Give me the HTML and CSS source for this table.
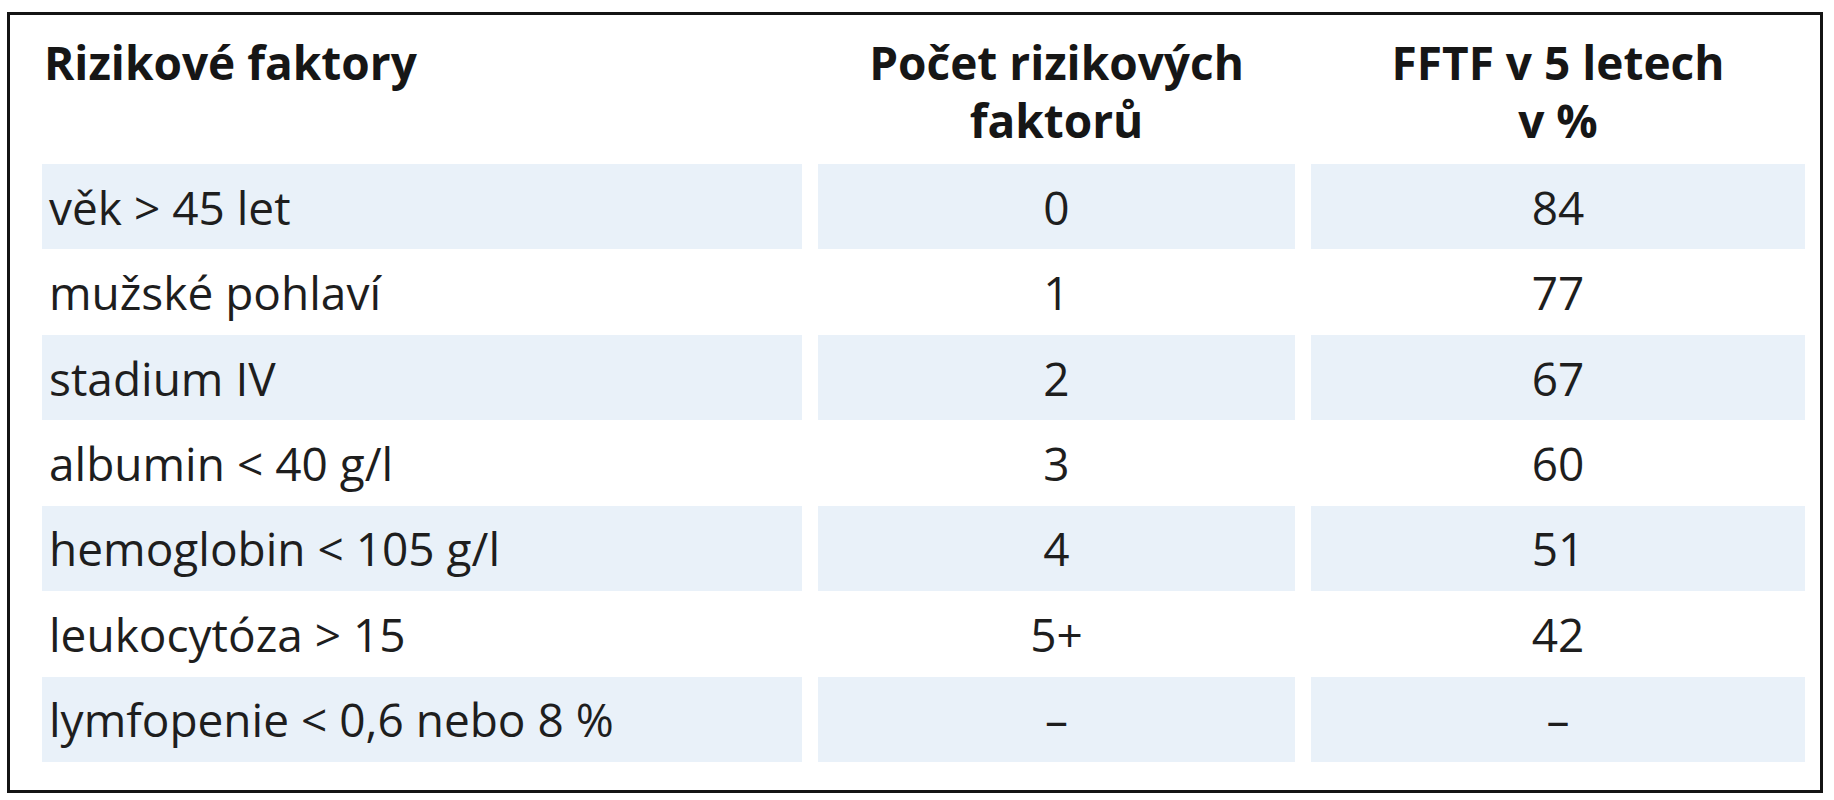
FILE: index.html
```html
<!DOCTYPE html>
<html lang="cs">
<head>
<meta charset="utf-8">
<title>Rizikové faktory</title>
<link rel="stylesheet" href="styles.css">
</head>
<body>
<div class="frame">
  <div class="grid">
    <div class="th left">Rizikové faktory</div>
    <div class="th">Počet rizikových<br>faktorů</div>
    <div class="th">FFTF v 5 letech<br>v %</div>

    <div class="td left shade">věk &gt; 45 let</div>
    <div class="td shade">0</div>
    <div class="td shade">84</div>

    <div class="td left">mužské pohlaví</div>
    <div class="td">1</div>
    <div class="td">77</div>

    <div class="td left shade">stadium IV</div>
    <div class="td shade">2</div>
    <div class="td shade">67</div>

    <div class="td left">albumin &lt; 40 g/l</div>
    <div class="td">3</div>
    <div class="td">60</div>

    <div class="td left shade">hemoglobin &lt; 105 g/l</div>
    <div class="td shade">4</div>
    <div class="td shade">51</div>

    <div class="td left">leukocytóza &gt; 15</div>
    <div class="td">5+</div>
    <div class="td">42</div>

    <div class="td left shade">lymfopenie &lt; 0,6 nebo 8 %</div>
    <div class="td shade">–</div>
    <div class="td shade">–</div>
  </div>
</div>
</body>
</html>
```

FILE: styles.css
```css
html, body {
  margin: 0;
  padding: 0;
  background: #ffffff;
}

body {
  font-family: "Open Sans", "Noto Sans", sans-serif;
  color: #1c1c1c;
}

.frame {
  box-sizing: border-box;
  margin: 12px 0 0 7px;
  width: 1816px;
  height: 781px;
  border: 3px solid #141414;
  padding: 0 16px 0 32px;
}

.grid {
  display: grid;
  grid-template-columns: 760px 477px 494px;
  grid-template-rows: 149px repeat(7, 85.43px);
  column-gap: 16px;
}

.th {
  box-sizing: border-box;
  padding-top: 18px;
  font-size: 46px;
  line-height: 58px;
  font-weight: 700;
  text-align: center;
  color: #161616;
}

.td {
  display: flex;
  align-items: center;
  justify-content: center;
  font-size: 46px;
  line-height: 1;
  font-weight: 400;
  color: #1e1e1e;
}

.th.left {
  text-align: left;
  padding-left: 2px;
}

.td.left {
  justify-content: flex-start;
  padding-left: 7px;
}

.shade {
  background: #e9f1f9;
}
```
